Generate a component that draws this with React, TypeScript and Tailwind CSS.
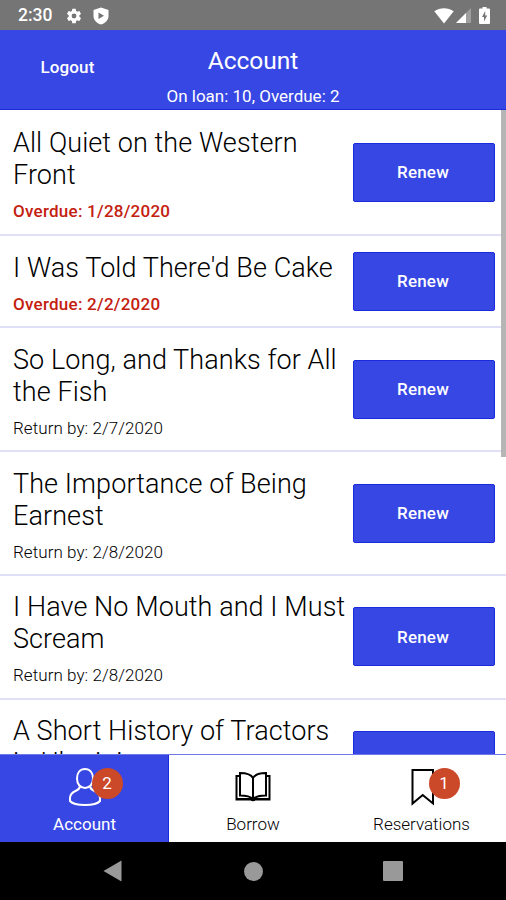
import React from 'react';

type Loan = {
  id: string;
  title: string;
  status: string;
  overdue?: boolean;
  height: string;
};

const loans: Loan[] = [
  { id: 'l1', title: 'All Quiet on the Western Front', status: 'Overdue: 1/28/2020', overdue: true, height: 'h-[125px]' },
  { id: 'l2', title: "I Was Told There'd Be Cake", status: 'Overdue: 2/2/2020', overdue: true, height: 'h-[92.4px]' },
  { id: 'l3', title: 'So Long, and Thanks for All the Fish', status: 'Return by: 2/7/2020', height: 'h-[123.8px]' },
  { id: 'l4', title: 'The Importance of Being Earnest', status: 'Return by: 2/8/2020', height: 'h-[123.8px]' },
  { id: 'l5', title: 'I Have No Mouth and I Must Scream', status: 'Return by: 2/8/2020', height: 'h-[124px]' },
  { id: 'l6', title: 'A Short History of Tractors in Ukrainian', status: 'Return by: 2/9/2020', height: 'h-[124px]' },
];

function StatusBar() {
  return (
    <div className="flex h-[30px] shrink-0 items-center bg-[#757575] pl-[18px] pr-[16px] pt-px text-white">
      <span className="w-[47px] pt-px text-[17.5px] font-medium leading-none">2:30</span>
      <svg viewBox="0 0 24 24" className="h-[18px] w-[18px]" fill="currentColor">
        <path d="M19.14 12.94c.04-.3.06-.61.06-.94s-.02-.64-.07-.94l2.03-1.58a.49.49 0 0 0 .12-.61l-1.92-3.32a.49.49 0 0 0-.59-.22l-2.39.96a7 7 0 0 0-1.62-.94l-.36-2.54a.48.48 0 0 0-.48-.41h-3.84a.48.48 0 0 0-.47.41l-.36 2.54c-.59.24-1.13.57-1.62.94l-2.39-.96a.48.48 0 0 0-.59.22L2.74 8.87a.48.48 0 0 0 .12.61l2.03 1.58a6 6 0 0 0 0 1.88l-2.03 1.58a.49.49 0 0 0-.12.61l1.92 3.32c.12.22.37.29.59.22l2.39-.96c.5.38 1.03.7 1.62.94l.36 2.54c.05.24.24.41.48.41h3.84c.24 0 .44-.17.47-.41l.36-2.54a7 7 0 0 0 1.62-.94l2.39.96c.22.08.47 0 .59-.22l1.92-3.32a.48.48 0 0 0-.12-.61zM12 15.2a3.2 3.2 0 1 1 0-6.4 3.2 3.2 0 0 1 0 6.4z" />
      </svg>
      <svg viewBox="0 0 16 18" className="ml-[10px] h-[18px] w-4" fill="currentColor">
        <path fillRule="evenodd" d="M8 .5 15.500 3v6c0 4-3 7.200-7.500 8.500C3.500 16.200.5 13 .5 9V3zM5.500 5.500v6.500L11 8.800z" />
      </svg>
      <div className="ml-auto flex items-center">
        <svg viewBox="0 0 20 16" className="h-4 w-5" fill="currentColor">
          <path d="M.3 3.300C6-.9 14-.9 19.700 3.300L10 15.500z" />
        </svg>
        <svg viewBox="0 0 15 15" className="ml-[2px] h-[15px] w-[15px]" fill="currentColor">
          <path d="M15 0v15H0z" opacity=".3" />
          <path d="M10 5v10H0z" />
        </svg>
        <svg viewBox="0 0 11 17" className="ml-[8px] h-[17px] w-[11px]" fill="currentColor">
          <path fillRule="evenodd" d="M3.500 0h4v1.500H10a1 1 0 0 1 1 1V16a1 1 0 0 1-1 1H1a1 1 0 0 1-1-1V2.500a1 1 0 0 1 1-1h2.500zM6.200 4 3 10h2v4.500L8.200 8.500h-2z" />
        </svg>
      </div>
    </div>
  );
}

function Header() {
  return (
    <header className="grid h-20 shrink-0 grid-cols-[135px_1fr_135px] border-b border-[#1a2bdc] bg-[#3747e3] text-white">
      <button className="pb-[3px] text-center text-[17px] font-medium tracking-[0.1px]">Logout</button>
      <div className="flex flex-col items-center pt-[15px]">
        <h1 className="text-[24.5px] leading-8">Account</h1>
        <p className="mt-[7px] whitespace-nowrap text-[17px] leading-6">On loan: 10, Overdue: 2</p>
      </div>
    </header>
  );
}

function LoanRow({ loan }: { loan: Loan }) {
  return (
    <li className={`flex shrink-0 border-b-2 border-[#dfe0f5] pl-[13px] pr-[11px] ${loan.height}`}>
      <div className="min-w-0 flex-1 pt-[15.500px]">
        <h2 className="w-[338px] text-[27px] font-light leading-8 tracking-[0.08px] text-black">{loan.title}</h2>
        <p
          className={`mt-[8px] text-[17px] leading-6 ${
            loan.overdue ? 'font-medium tracking-[0.25px] text-[#c4200f]' : 'font-light tracking-[0.06px] text-black'
          }`}
        >
          {loan.status}
        </p>
      </div>
      <button className="h-[59px] w-[142px] shrink-0 self-center rounded-[2px] border border-[#1a2bdc] bg-[#3747e3] pr-[2px] pt-px text-[17px] font-medium tracking-[0.2px] text-white">
        Renew
      </button>
    </li>
  );
}

function Badge({ count }: { count: number }) {
  return (
    <span className="absolute left-[23px] top-0 flex h-[31px] w-[31px] items-center justify-center rounded-full bg-[#cb4829] text-[17px] text-white">
      {count}
    </span>
  );
}

function TabBar() {
  return (
    <nav className="grid h-[88px] shrink-0 grid-cols-[169px_168px_169px] border-t border-[#6f79ea] bg-white text-black">
      <button className="flex flex-col items-center border-r border-[#1a2bdc] bg-[#3747e3] pl-px pt-[13px] text-white">
        <span className="relative h-[38px] w-8">
          <svg viewBox="0 0 32 38" className="h-[38px] w-8" fill="none" stroke="currentColor" strokeWidth="2">
            <path d="M16 1c-5 0-8 4-8 9.500 0 6 3.500 9.500 8 9.500s8-3.500 8-9.500C24 5 21 1 16 1z" />
            <path d="M11 18.500c-.5 2.500-1.500 3.200-4 4.200C3 24.300 1 26.500 1 30v3c2.500 3 8.500 4 15 4s12.500-1 15-4v-3c0-3.500-2-5.700-6-7.300-2.500-1-3.500-1.700-4-4.200" />
          </svg>
          <Badge count={2} />
        </span>
        <span className="mt-[6px] text-[17px] leading-6">Account</span>
      </button>
      <button className="flex flex-col items-center pt-[13px]">
        <svg viewBox="0 0 38 38" className="h-[38px] w-[38px]" fill="none" stroke="currentColor" strokeWidth="2">
          <path d="M19 10C17 6.500 12.500 5 6 5v22.500C12 27.500 16.500 28.500 19 31c2.500-2.500 7-3.500 13-3.500V5C25.500 5 21 6.500 19 10zM19 10v21" />
          <path d="M6 8H2.500v23.500H17c1 1 3 1 4 0h14.500V8H32" />
          <path d="M3 30.500h15M20 30.500h15" strokeWidth="1" />
        </svg>
        <span className="mt-[6px] text-[17px] font-light leading-6">Borrow</span>
      </button>
      <button className="flex flex-col items-center pt-[13px]">
        <span className="relative h-[38px] w-8">
          <svg viewBox="0 0 32 38" className="h-[38px] w-8" fill="none" stroke="currentColor" strokeWidth="2">
            <path d="M6.500 2h20.500V35.500L16.700 27 6.500 35.500z" />
          </svg>
          <Badge count={1} />
        </span>
        <span className="mt-[6px] text-[17px] font-light leading-6">Reservations</span>
      </button>
    </nav>
  );
}

function SystemNav() {
  return (
    <div className="grid h-[58px] shrink-0 grid-cols-[140px_1fr_140px] items-center bg-black px-[43px] text-[#999]">
      <svg viewBox="0 0 20 22" className="mx-auto h-[22px] w-5" fill="currentColor">
        <path d="M18.500.5v21L.5 11z" />
      </svg>
      <div className="mx-auto h-[19px] w-[19px] rounded-full bg-[#999]" />
      <div className="mx-auto h-[20px] w-[20px] rounded-[1px] bg-[#999]" />
    </div>
  );
}

export default function App() {
  return (
    <div className="flex h-[900px] w-[506px] flex-col overflow-hidden bg-white font-['Roboto',sans-serif]">
      <StatusBar />
      <Header />
      <main className="relative min-h-0 flex-1 overflow-hidden">
        <ul className="flex flex-col pt-px">
          {loans.map((loan) => (
            <LoanRow key={loan.id} loan={loan} />
          ))}
        </ul>
        {/* Scroll thumb */}
        <div className="absolute right-0 top-0 h-[347px] w-[5px] bg-[#b5b5b5]" />
      </main>
      <TabBar />
      <SystemNav />
    </div>
  );
}
